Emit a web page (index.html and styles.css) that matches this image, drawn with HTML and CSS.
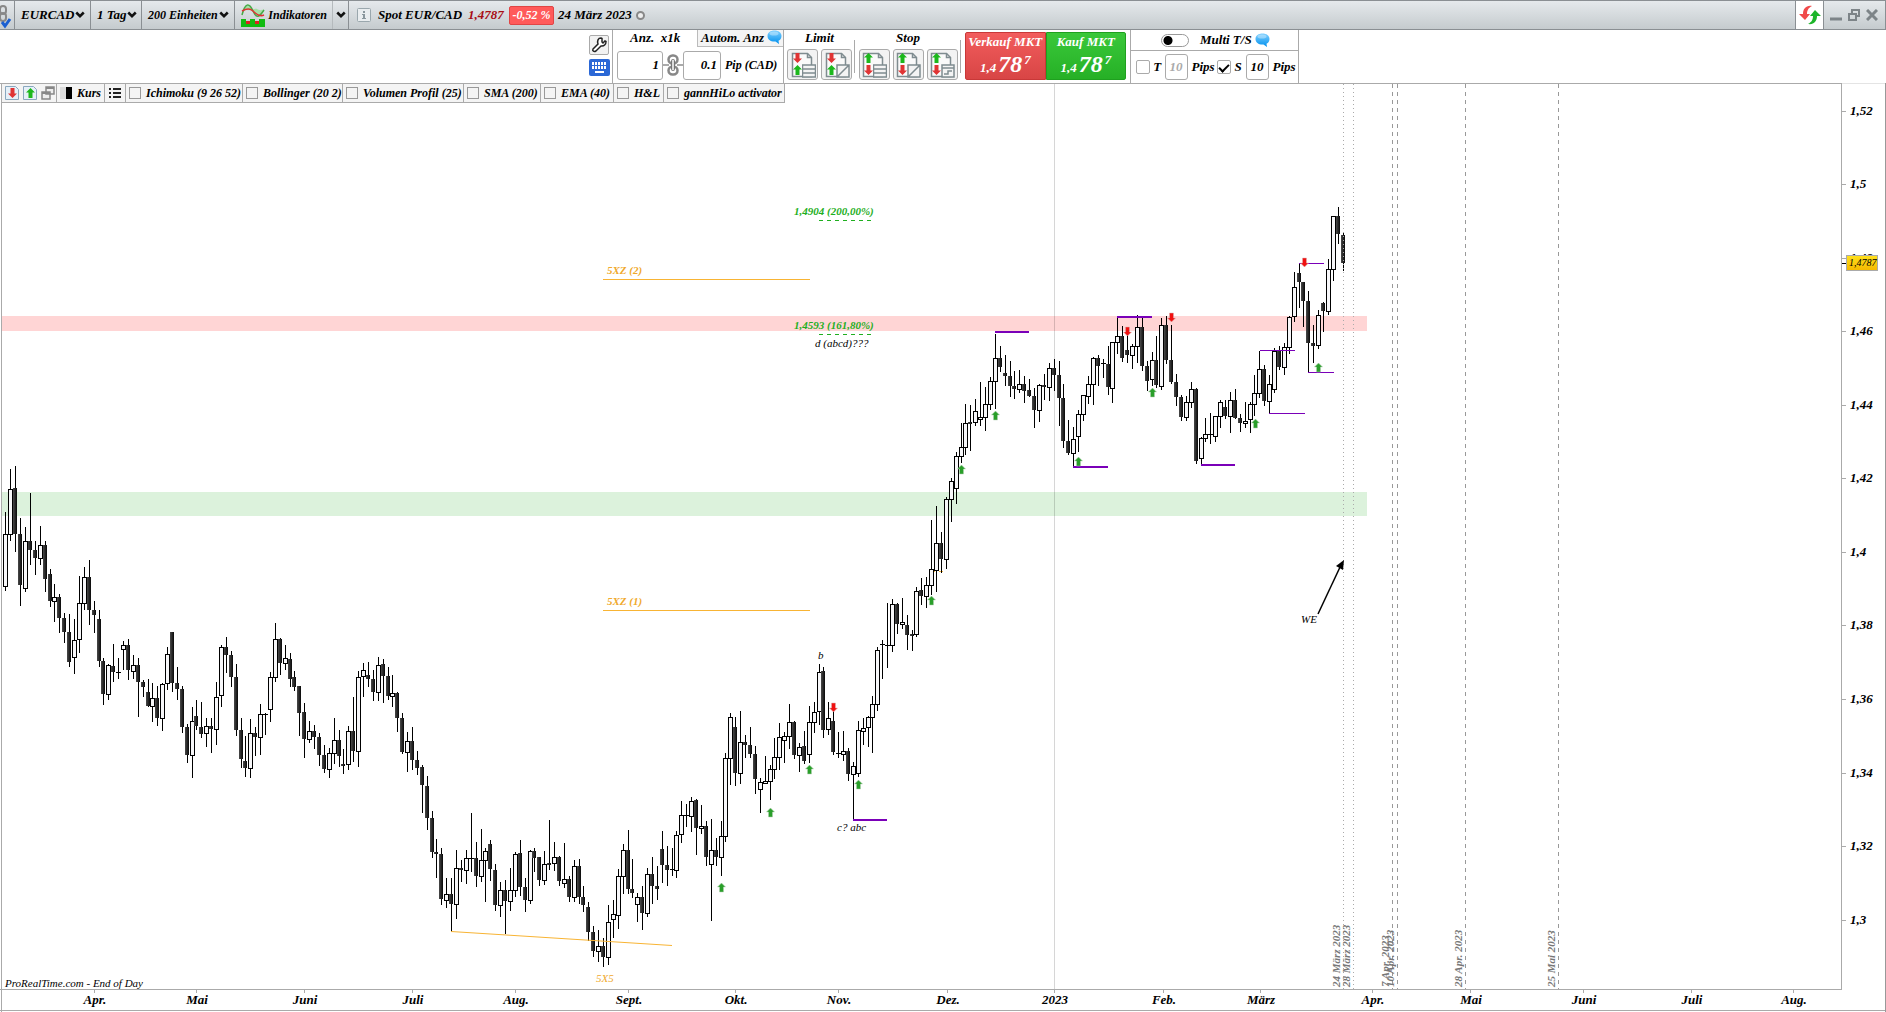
FILE: index.html
```html
<!DOCTYPE html>
<html lang="de">
<head>
<meta charset="utf-8">
<title>EURCAD – 1 Tag</title>
<link rel="stylesheet" href="styles.css">
</head>
<body>
<svg class="defs" aria-hidden="true">
  <symbol id="i-chev" viewBox="0 0 8 6"><path d="M1 1l3 3 3-3" fill="none" stroke="#111" stroke-width="2"/></symbol>
  <symbol id="i-bubble" viewBox="0 0 15 15"><path d="M7.500.5c4 0 7 2.200 7 5.500 0 2.300-1.200 4-3 4.800L12 14 8.500 11.500C4 12 .5 9.500.5 6 .5 2.700 3.500.5 7.500.5z" fill="url(#gb)"/><ellipse cx="7" cy="3.500" rx="4.500" ry="2" fill="#fff" opacity=".35"/></symbol>
  <symbol id="i-chain" viewBox="0 0 22 22"><path d="M0 11h7M15 11h7" stroke="#aaa" stroke-width="2"/><rect x="6.500" y="1.500" width="9" height="8" rx="4" fill="none" stroke="#888" stroke-width="2.500"/><rect x="6.500" y="12.500" width="9" height="8" rx="4" fill="none" stroke="#888" stroke-width="2.500"/><rect x="9.500" y="5.500" width="3" height="11" rx="1" fill="#ddd" stroke="#777"/></symbol>
  <symbol id="i-doc" viewBox="0 0 28 28"><path d="M3.500 25.500v-23h15l4 4v19z" fill="#fafafa" stroke="#7f8c90" stroke-width="1.500"/><path d="M18.500 2.500v4h4" fill="none" stroke="#7f8c90" stroke-width="1.500"/></symbol>
  <symbol id="i-up" viewBox="0 0 9 10"><path d="M4.500 0L9 4.500H6.500V10h-4V4.500H0z"/></symbol>
  <symbol id="i-down" viewBox="0 0 9 10"><path d="M4.500 10L9 5.500H6.500V0h-4v5.500H0z"/></symbol>
  <symbol id="i-rows" viewBox="0 0 14 14"><path d="M.5 1h13v4H.5zM.5 5h13v4H.5zM.5 9h13v4H.5z" fill="#f4f4f4" stroke="#7f8c90" stroke-width="1.500"/></symbol>
  <symbol id="i-slash" viewBox="0 0 14 14"><path d="M1 1h12v12H1zM1 13L13 1" fill="#f4f4f4" stroke="#7f8c90" stroke-width="1.500"/></symbol>
  <symbol id="i-step" viewBox="0 0 14 14"><path d="M1 1h12v12H1zM1 4h12M3 10h4V7h4" fill="#f4f4f4" stroke="#7f8c90" stroke-width="1.500"/></symbol>
  <linearGradient id="gb" x2="0" y2="1"><stop stop-color="#7fd0ff"/><stop offset="1" stop-color="#0090ee"/></linearGradient>
</svg>

<header class="titlebar">
  <div class="cell link"><svg width="14" height="28" viewBox="0 0 14 28"><rect x="0" y="5" width="6" height="8" rx="3" fill="none" stroke="#888" stroke-width="2"/><rect x="0" y="12" width="6" height="8" rx="3" fill="none" stroke="#888" stroke-width="2"/><path d="M2 21l3 4 5-7" fill="none" stroke="#1b5fd0" stroke-width="3"/></svg></div>
  <button class="cell symbol">EURCAD <svg width="10" height="8"><use href="#i-chev"/></svg></button>
  <button class="cell frame">1 Tag <svg width="10" height="8"><use href="#i-chev"/></svg></button>
  <button class="cell units">200 Einheiten <svg width="10" height="8"><use href="#i-chev"/></svg></button>
  <button class="cell indicators"><svg width="24" height="24" viewBox="0 0 24 24"><path d="M1 12C4 3 6 1 9 4s6 10 10 8l4-6c-3 2-5 1-7 0S9 8 6 7 3 10 1 12z" fill="#a5e0a5"/><path d="M1 12C4 0 8-1 12 8s7 5 11-1" fill="none" stroke="#4a4" stroke-width="1.500"/><path d="M1 8c5-3 8-3 11 0s7 6 11 4" fill="none" stroke="#d33" stroke-width="1.500"/><path d="M0 24v-8h5v2h4v-2h5v2h4v-2h6v8z" fill="#1b1"/><path d="M5 18h4v3H5zM14 18h4v3h-4z" fill="#d22"/></svg>Indikatoren</button>
  <button class="cell more" aria-label="Mehr"><svg width="10" height="8"><use href="#i-chev"/></svg></button>
  <div class="quote">
    <svg width="14" height="14" viewBox="0 0 14 14"><rect x=".5" y=".5" width="13" height="13" rx="1" fill="#e9edef" stroke="#9aa7ad"/><path d="M6 3h2v2H6zM5 6h3v4h1v1H5v-1h1V7H5z" fill="#8a979d"/></svg>
    <span class="name">Spot EUR/CAD</span>
    <span class="last">1,4787</span>
    <span class="change">-0,52 %</span>
    <span class="date">24 März 2023</span>
    <span class="dot"></span>
  </div>
  <div class="window">
    <button class="refresh" aria-label="Aktualisieren"><svg width="22" height="20" viewBox="0 0 22 20"><path d="M13 1C7 0 4 4 4 9H0l6 6 5-6H8c0-3 1-6 5-8z" fill="#f04a4a"/><path d="M9 19c6 1 9-3 9-8h4l-6-6-5 6h3c0 3-1 6-5 8z" fill="#1db52a"/></svg></button>
    <button aria-label="Minimieren"><svg width="12" height="12"><path d="M0 10h12" stroke="#7d8488" stroke-width="3"/></svg></button>
    <button aria-label="Wiederherstellen"><svg width="12" height="12" viewBox="0 0 12 12"><path d="M4 4V1h7v6H8M1 5h7v6H1z" fill="none" stroke="#7d8488" stroke-width="2"/></svg></button>
    <button aria-label="Schließen"><svg width="12" height="12" viewBox="0 0 12 12"><path d="M1 1l10 10M11 1L1 11" stroke="#7d8488" stroke-width="3"/></svg></button>
  </div>
</header>

<section class="trade">
  <div class="tools">
    <button class="wrench" aria-label="Einstellungen"><svg width="16" height="16" viewBox="0 0 16 16"><path d="M2 12l5-5c-1-3 0-6 3-6l1 .5V5l1 1 2-2 1 .5c0 3-2 5-5 4.500L5 14c-2 1-4 0-3-2z" fill="#fff" stroke="#222" stroke-width="1.500"/></svg></button>
    <button class="keys" aria-label="Tastatur"><svg width="21" height="17" viewBox="0 0 21 17"><rect width="21" height="17" rx="2" fill="#2b68d6"/><path d="M3 4.500h15M3 8.500h15" stroke="#fff" stroke-width="3" stroke-dasharray="2 1"/><path d="M6 13h9" stroke="#fff" stroke-width="2"/></svg></button>
  </div>
  <div class="amount">
    <div class="amount-head"><label for="qty">Anz. &nbsp;x1k</label><span class="auto">Autom. Anz <svg width="15" height="15"><use href="#i-bubble"/></svg></span></div>
    <div class="amount-row"><input id="qty" class="field wide" value="1"><svg class="chain" width="22" height="22"><use href="#i-chain"/></svg><input id="pip" class="field" value="0.1"><label class="pip" for="pip">Pip (CAD)</label></div>
  </div>
  <div class="orders two"><span>Limit</span>
    <div class="order-row">
      <button aria-label="Limit 1"><svg width="28" height="28" viewBox="0 0 28 28"><use href="#i-doc"/><use href="#i-down" x="4" y="2" width="9" height="10" fill="#e03434"/><use href="#i-up" x="4" y="14" width="9" height="10" fill="#1cb81c"/><use href="#i-rows" x="13" y="13" width="14" height="14"/></svg></button>
      <button aria-label="Limit 2"><svg width="28" height="28" viewBox="0 0 28 28"><use href="#i-doc"/><use href="#i-down" x="4" y="2" width="9" height="10" fill="#e03434"/><use href="#i-up" x="4" y="14" width="9" height="10" fill="#1cb81c"/><use href="#i-slash" x="13" y="13" width="14" height="14"/></svg></button>
    </div>
  </div>
  <div class="orders three"><span>Stop</span>
    <div class="order-row">
      <button aria-label="Stop 1"><svg width="28" height="28" viewBox="0 0 28 28"><use href="#i-doc"/><use href="#i-up" x="4" y="2" width="9" height="10" fill="#1cb81c"/><use href="#i-down" x="4" y="14" width="9" height="10" fill="#e03434"/><use href="#i-rows" x="13" y="13" width="14" height="14"/></svg></button>
      <button aria-label="Stop 2"><svg width="28" height="28" viewBox="0 0 28 28"><use href="#i-doc"/><use href="#i-up" x="4" y="2" width="9" height="10" fill="#1cb81c"/><use href="#i-down" x="4" y="14" width="9" height="10" fill="#e03434"/><use href="#i-slash" x="13" y="13" width="14" height="14"/></svg></button>
      <button aria-label="Stop 3"><svg width="28" height="28" viewBox="0 0 28 28"><use href="#i-doc"/><use href="#i-up" x="4" y="2" width="9" height="10" fill="#1cb81c"/><use href="#i-down" x="4" y="14" width="9" height="10" fill="#e03434"/><use href="#i-step" x="13" y="13" width="14" height="14"/></svg></button>
    </div>
  </div>
  <div class="market">
    <button class="sell"><span>Verkauf MKT</span><span class="price"><small>1,4</small><b>78</b><sup>7</sup></span></button>
    <button class="buy"><span>Kauf MKT</span><span class="price"><small>1,4</small><b>78</b><sup>7</sup></span></button>
  </div>
  <div class="multi">
    <div class="multi-head"><input type="checkbox" id="multi" class="switch"><label for="multi">Multi T/S</label><svg width="15" height="15"><use href="#i-bubble"/></svg></div>
    <div class="multi-row">
      <input type="checkbox" id="t" class="tick"><label class="letter" for="t">T</label><input class="field small off" value="10" aria-label="T Pips"><span class="unit">Pips</span>
      <input type="checkbox" id="s" class="tick" checked><label class="letter" for="s">S</label><input class="field small" value="10" aria-label="S Pips"><span class="unit">Pips</span>
    </div>
  </div>
</section>

<main class="chart">
  <div class="legend">
    <div class="item w-icons">
      <svg width="14" height="14" viewBox="0 0 14 14"><path d="M.5.5h10l3 3v10H.5z" fill="#e6f0f8" stroke="#8aa8bf"/><use href="#i-down" x="3" y="2" width="9" height="10" fill="#e03434"/></svg>
      <svg width="14" height="14" viewBox="0 0 14 14"><path d="M.5.5h10l3 3v10H.5z" fill="#e6f0f8" stroke="#8aa8bf"/><use href="#i-up" x="3" y="2" width="9" height="10" fill="#1cb81c"/></svg>
      <svg width="14" height="14" viewBox="0 0 14 14"><path d="M5 1h8v7H5zM1 6h8v7H1z" fill="#eee" stroke="#888" stroke-width="1.500"/><path d="M5 2h8M1 7h8" stroke="#888" stroke-width="2"/></svg>
    </div>
    <div class="item w-kurs"><span class="swatch"></span><span>Kurs</span></div>
    <div class="item w-list"><svg width="12" height="12" viewBox="0 0 12 12"><path d="M0 2h2M4 2h8M0 6h2M4 6h8M0 10h2M4 10h8" stroke="#222" stroke-width="2"/></svg></div>
    <label class="item w-ichi"><input type="checkbox"><span>Ichimoku (9 26 52)</span></label>
    <label class="item w-boll"><input type="checkbox"><span>Bollinger (20 2)</span></label>
    <label class="item w-vol"><input type="checkbox"><span>Volumen Profil (25)</span></label>
    <label class="item w-sma"><input type="checkbox"><span>SMA (200)</span></label>
    <label class="item w-ema"><input type="checkbox"><span>EMA (40)</span></label>
    <label class="item w-hl"><input type="checkbox"><span>H&amp;L</span></label>
    <label class="item w-gann"><input type="checkbox"><span>gannHiLo activator</span></label>
  </div>
  <svg class="plot" viewBox="0 83 1886 929" role="img" aria-label="EUR/CAD Tageskerzen">
    <defs>
      <linearGradient id="gf"><stop stop-color="#4a4a4a"/><stop offset="1" stop-color="#080808"/></linearGradient>
      <linearGradient id="gp" x2="0" y2="1"><stop stop-color="#ffe11c"/><stop offset="1" stop-color="#f5b800"/></linearGradient>
      <g id="buy"><path d="M0 0l4 4H2v5h-4V4h-2z" transform="translate(.5 0)" fill="#2a9f2a" stroke="#b5ceb5" stroke-width=".5"/></g>
      <g id="sell"><path d="M0 9l4-4H2V0h-4v5h-2z" transform="translate(.5 0)" fill="#f01010" stroke="#d8b5b5" stroke-width=".5"/></g>
    </defs>
    <g class="crisp">
      <rect x="2" y="316" width="1365" height="15" fill="#ffd5d5"/>
      <rect x="2" y="492" width="1365" height="24" fill="#dcf2dc"/>
      <rect x="1054" y="84" width="1" height="905" fill="#000" opacity=".16"/>
      <path d="M1 83V1012M0 1010.500H1886M0 989.500H1842M1841.500 83V990M0 83.500H1842" class="frame-line"/>
      <path d="M1885.500 83V1012" stroke="#999"/>
      <path d="M1842 83.500H1885" stroke="#e4e4e4"/>
      <path d="M603 279.500H810M603 610.500H810M931 571.500h4M939 571.500h4" stroke="#f8b434" fill="none"/>
      <path d="M819 220.500h53M819 334.500h53" fill="none" stroke="#1faf1f" stroke-dasharray="4 4"/>
      <g id="candles"></g>
      <path d="M1343.500 84V989M1353.500 84V989" fill="none" stroke="#aaa" stroke-dasharray="1 3"/>
      <path d="M1392.500 84V989M1397.500 84V989M1465.500 84V989M1558.500 84V989" fill="none" stroke="#999" stroke-dasharray="4 4"/>
      <path d="M995 332h34M1117 317h35M1073 467h35M1201 465h34M853 820h34" fill="none" stroke="#7a00b8" stroke-width="2"/>
      <path d="M1260 350.500h35M1269 413.500h36M1308 372.500h26M1299 263.500h25" fill="none" stroke="#7a00b8"/>
    </g>
    <path d="M451 931.500L672 945.500" stroke="#f8b434"/>
    <path d="M1318 614L1341 565" stroke="#000" stroke-width="1.500"/><path d="M1344 560l-1 10-7-4z" fill="#000"/>
    <g id="signals"></g>
    <g class="note bold green"><text x="794" y="215">1,4904 (200,00%)</text><text x="794" y="329">1,4593 (161,80%)</text></g>
    <g class="note bold orange"><text x="607" y="274">5XZ (2)</text><text x="607" y="605">5XZ (1)</text></g>
    <text class="note orange" x="596" y="982">5X5</text>
    <g class="note"><text x="815" y="347">d (abcd)???</text><text x="818" y="659">b</text><text x="837" y="831">c? abc</text><text x="1301" y="623">WE</text><text class="brand" x="5" y="987">ProRealTime.com - End of Day</text></g>
    <g class="note bold grey">
      <text transform="translate(1340 987) rotate(-90)">24 März 2023</text><text transform="translate(1350 987) rotate(-90)">28 März 2023</text>
      <text transform="translate(1389 987) rotate(-90)">7 Apr. 2023</text><text transform="translate(1394 987) rotate(-90)">10 Apr. 2023</text>
      <text transform="translate(1462 987) rotate(-90)">28 Apr. 2023</text><text transform="translate(1555 987) rotate(-90)">25 Mai 2023</text>
    </g>
    <g id="axes" class="axis"></g>
    <path d="M1842 263.500h4" stroke="#000"/>
    <rect x="1846.500" y="255.500" width="31" height="15" fill="url(#gp)" stroke="#aaa"/>
    <text class="note tag" x="1849" y="266">1,4787</text>
  </svg>
</main>
<script src="chart.js"></script>
</body>
</html>
```
FILE: styles.css
```css
* { box-sizing: border-box; }
body { margin: 0; background: #fff; color: #000; font: italic bold 13px/16px "Liberation Serif", "Times New Roman", serif; overflow-x: hidden; }
button, input { font: inherit; color: inherit; margin: 0; }
button { background: none; border: 0; padding: 0; }
svg { display: block; flex: none; }
.defs { position: absolute; width: 0; height: 0; }

.titlebar { display: flex; height: 30px; border: 1px solid #8a8f93; border-left: 0; background: linear-gradient(#e5e9ec, #c5cbce); white-space: nowrap; }
.cell { display: flex; align-items: center; justify-content: space-between; flex: none; padding: 0 5px 0 6px; border-right: 1px solid #8a8f93; }
.cell.link { width: 15px; padding: 0; }
.symbol { width: 76px; }
.frame { width: 51px; }
.units { width: 93px; font-size: 12px; }
.indicators { width: 98px; border-right-color: #b5babd; font-size: 12px; }
.more { width: 16px; padding: 0 3px; }
.quote { display: flex; align-items: center; gap: 4px; padding-left: 8px; }
.name { margin-left: 3px; width: 86px; }
.last { color: #a80d14; width: 37px; }
.change { height: 19px; width: 45px; line-height: 17px; text-align: center; border: 1px solid #e04545; border-radius: 2px; background: #ff5a5a; color: #fff; font-size: 12px; }
.date { width: 74px; }
.dot { width: 9px; height: 9px; border: 2px solid #888; border-radius: 50%; background: #eee; }
.window { display: flex; align-items: center; gap: 6px; margin-left: auto; padding-right: 7px; }
.refresh { display: grid; place-items: center; width: 29px; height: 28px; background: #fff; border: 1px solid #8a8f93; border-width: 0 1px; }

.trade { display: flex; justify-content: center; height: 53px; white-space: nowrap; }
.tools { display: flex; flex-direction: column; gap: 4px; padding: 5px 3px 0 2px; border-right: 1px solid #aaa; width: 26px; }
.wrench { display: grid; place-items: center; width: 20px; height: 20px; border: 1px solid #aaa; border-radius: 2px; background: #f2f2f2; }
.amount { width: 171px; border-right: 1px solid #aaa; }
.amount-head { display: flex; height: 17px; justify-content: flex-end; line-height: 15px; }
.amount-head label { width: 67px; }
.auto { display: flex; width: 86px; gap: 3px; padding-left: 3px; border: 1px solid #bbb; border-width: 0 0 1px 1px; background: #f4f4f4; }
.amount-row { display: flex; align-items: center; height: 36px; padding-left: 4px; }
.field { height: 29px; width: 38px; padding: 0 3px; text-align: right; border: 1px solid #aaa; border-radius: 3px; background: #fff; }
.field.wide { width: 46px; }
.chain { margin: 0 -1px; }
.pip { margin-left: 4px; width: 53px; font-size: 12px; }
.orders { display: flex; flex-direction: column; align-items: center; gap: 3px; padding: 0 2px; position: relative; }
.orders.two { width: 71px; }
.orders.three { width: 106px; padding: 0 3px; }
.orders::after { content: ""; position: absolute; right: 0; top: 10px; height: 33px; border-right: 1px solid #aaa; }
.order-row { display: flex; gap: 3px; }
.order-row button { display: grid; place-items: center; width: 31px; height: 31px; border: 1px solid #aaa; border-radius: 3px; background: #f3f3f3; }
.market { display: flex; padding: 2px 4px 0 4px; width: 170px; border-right: 1px solid #aaa; }
.market button { display: flex; flex-direction: column; align-items: center; flex: 1; height: 48px; color: #fff; line-height: 17px; }
.sell { background: linear-gradient(#f25c5c, #d84545); border: 1px solid #c83838; border-radius: 2px 0 0 2px; }
.buy { background: linear-gradient(#3ac83a, #26b026); border: 1px solid #1fa01f; border-radius: 0 2px 2px 0; }
.price { display: flex; align-items: baseline; gap: 2px; line-height: 28px; }
.price small { font-size: 13px; }
.price b { font-size: 24px; }
.price sup { font-size: 13px; line-height: 13px; align-self: flex-start; padding-top: 3px; vertical-align: baseline; }
.multi { width: 168px; border-right: 1px solid #aaa; }
.multi-head { display: flex; align-items: center; height: 21px; padding-left: 30px; border-bottom: 1px solid #aaa; }
.multi-head label { width: 55px; margin: 0 0 0 11px; }
.switch { appearance: none; width: 28px; height: 13px; border: 1px solid #999; border-radius: 7px; background: radial-gradient(circle at 6px 50%, #000 4px, #fff 5px); }
.multi-row { display: flex; align-items: center; height: 31px; padding-left: 5px; }
.tick { appearance: none; width: 14px; height: 14px; border: 1px solid #aaa; border-radius: 2px; background: #fff; display: grid; place-items: center; }
.tick:checked::after { content: ""; width: 8px; height: 4px; border: solid #000; border-width: 0 0 2px 2px; transform: rotate(-45deg); }
.letter { width: 15px; text-align: center; }
.field.small { width: 23px; height: 26px; text-align: center; }
.off { color: #aaa; }
.unit { width: 30px; padding-left: 4px; }

.chart { position: relative; }
.plot { width: 100%; height: auto; }
.legend { position: absolute; left: 2px; top: 1px; display: flex; height: 19px; background: #f4f4f4; border-bottom: 1px solid #aaa; font-size: 12px; line-height: 16px; white-space: nowrap; }
.item { display: flex; align-items: center; flex: none; gap: 5px; padding: 0 1px 0 3px; border-right: 1px solid #aaa; }
.item input { appearance: none; flex: none; width: 12px; height: 12px; border: 1px solid #999; background: #f4f4f4; }
.swatch { flex: none; width: 12px; height: 12px; background: linear-gradient(90deg, #ddd 50%, #000 50%); }
.w-icons { width: 55px; gap: 4px; }
.w-kurs { width: 48px; }
.w-list { width: 21px; padding-left: 4px; }
.w-ichi { width: 117px; }
.w-boll { width: 100px; }
.w-vol { width: 121px; }
.w-sma { width: 77px; }
.w-ema { width: 73px; }
.w-hl { width: 50px; }
.w-gann { width: 121px; }

.crisp { shape-rendering: crispEdges; }
.frame-line { stroke: #aaa; fill: none; }
.wick { stroke: #000; fill: none; }
.hollow { stroke: #000; fill: #f7f7f9; }
.filled { fill: url(#gf); }
.note { font-size: 11px; font-weight: normal; }
.note.bold { font-weight: bold; }
.note.tag { font-size: 10px; }
.note .brand { font-size: 11px; }
.green { fill: #1faf1f; }
.orange { fill: #f0a92c; }
.note.grey { fill: #777; font-size: 11px; }
.tickline { stroke: #aaa; }
.month { text-anchor: middle; }
```
FILE: chart.js
```js
// Candles, oldest first: high, body top, body bottom, low; "f" = falling, "h" = rising
const DATA = `
h512 534 587 591,h469 489 535 541,f466 488 534 552,f518 534 585 606,h527 541 589 592,f493 541 550 565,f541 550 558 575,h526 545 559 565,f541 545 579 592,f569 574 601 607
h584 597 602 622,f594 597 618 633,f613 618 632 643,f614 632 662 667,h619 640 658 674,h576 603 640 653,h567 577 604 610,f560 577 610 625,f601 610 615 633,f610 619 661 667
f658 661 694 705,h664 665 695 700,f644 666 672 682,f658 672 673 679,h641 645 650 670,f639 645 670 680,h655 665 672 679,f658 665 682 717,f680 682 687 697,f679 692 706 707
h683 698 707 722,f686 698 718 726,h683 684 719 731,h647 654 684 690,f632 632 683 692,f667 683 689 700,f686 689 727 733,f724 727 755 763,h707 721 756 778,f700 716 726 730
f702 727 734 738,h718 726 734 747,f718 726 729 753,h682 697 730 745,h645 647 696 707,f637 647 655 673,f651 655 677 687,f664 677 730 736,f718 730 759 768,f736 761 768 777
h719 733 769 778,f727 733 737 756,h704 714 738 755,f713 714 715 735,h672 677 710 722,h623 639 678 682,f638 639 663 675,h645 658 664 670,f653 659 679 687,f671 677 687 691
f686 686 713 736,f703 712 739 758,h721 731 740 743,f725 731 737 749,f733 737 755 766,f745 755 769 773,h748 753 770 778,h718 740 754 764,f730 740 756 767,f749 764 766 774
h726 731 765 770,f697 731 751 762,h671 677 752 767,h663 670 677 697,f662 675 679 687,f670 679 692 701,h657 665 693 701,f659 664 676 703,f667 676 696 700,h675 693 697 707
f692 693 718 732,f713 718 752 754,h732 741 753 772,f727 741 760 770,f751 760 768 775,f765 767 785 813,f776 786 818 830,f811 818 852 858,f839 852 854 878,f848 854 899 905
h878 894 901 908,f878 894 904 932,h850 868 905 919,f860 868 870 882,h850 858 871 884,f813 858 859 872,f842 858 876 887,h829 860 877 882,h848 851 861 902,f840 844 869 881
f864 870 905 911,h882 890 906 917,f880 890 901 934,h868 890 902 911,h852 854 891 897,f840 853 887 896,f878 887 900 912,h850 851 901 904,f848 851 858 872,f857 857 880 886
h851 864 881 885,f820 863 865 870,h842 857 864 871,f856 857 881 886,h843 879 884 888,f876 879 897 902,h860 866 898 902,f859 866 897 904,f886 897 905 912,f902 907 932 941
f926 932 951 957,h930 946 952 962,f938 946 957 967,h905 922 958 965,h900 914 920 938,h869 876 916 929,h844 850 877 894,f830 850 889 894,f859 889 893 898,h893 897 905 922
f886 897 913 930,h868 874 914 917,f857 874 886 904,f866 886 889 900,f831 849 865 883,f846 865 870 886,f848 869 870 876,h831 835 871 878,h801 815 835 843,f804 815 816 827
h797 801 817 832,f799 800 828 855,h805 826 829 834,f821 826 857 866,h819 850 865 921,f838 850 857 866,h821 836 858 876,h753 758 837 842,h713 717 759 785,f717 727 773 786
h711 742 774 784,f735 742 745 758,f727 745 754 758,f746 754 779 794,h778 782 790 813,h756 781 784 784,h765 769 782 800,h738 757 770 779,h723 737 758 770,h732 736 741 763
h704 722 737 749,f721 722 755 759,h743 747 756 772,f731 746 761 764,h706 722 755 763,h702 712 723 733,h664 672 712 725,f667 671 730 738,h702 718 730 735,f710 721 752 755
f732 753 754 758,h731 751 755 761,f748 751 774 781,h762 766 775 820,h721 730 774 777,h718 728 732 745,h716 717 728 747,h696 704 718 753,h647 650 705 711,f640 644 645 679
f603 645 646 668,h599 604 646 652,f603 604 624 634,h598 622 625 629,f615 625 635 650,f630 634 636 651,h587 591 635 637,f578 590 596 605,h577 585 597 608,h520 569 586 595
h506 543 571 592,f532 543 559 573,h497 499 560 569,h478 481 500 522,h452 456 489 504,h423 447 457 463,h404 423 448 455,f405 422 424 451,h399 411 423 426,h382 417 420 426
h387 404 418 431,h377 381 405 410,h334 358 382 409,f346 358 367 372,f355 373 376 386,f361 376 386 397,f371 386 389 399,h370 384 390 393,f376 384 391 403,f379 390 396 397
f388 396 410 428,h384 385 411 422,f374 385 387 400,h363 368 388 401,f359 368 375 391,f361 375 398 426,f384 398 441 448,f420 441 453 455,h427 439 454 466,h410 414 437 452
h395 395 415 421,h376 384 397 404,h357 358 385 405,f355 358 366 386,f359 363 364 378,f346 364 387 395,h342 342 389 403,h318 336 343 354,f326 336 358 362,f335 350 355 363
h344 346 356 369,h315 327 347 363,f317 327 366 371,f361 366 381 391,h352 360 380 386,f336 360 385 388,h318 325 387 390,f316 325 360 364,f325 360 382 384,f374 382 397 406
f395 397 417 421,h396 402 418 421,h382 389 403 408,f388 389 461 464,h437 438 459 464,h418 434 439 442,f413 434 435 444,h416 416 437 442,h400 402 417 428,f400 407 416 419
h392 400 417 433,f389 400 418 419,f414 418 423 432,h402 421 424 428,h402 404 420 433,h375 393 405 416,h351 369 394 398,f365 369 401 406,h375 384 402 413,h348 351 390 393
f346 351 367 370,h343 347 368 375,h316 317 348 354,h272 287 317 322,f264 273 282 308,f282 282 301 327,f291 301 343 372,f325 343 346 363,h310 315 346 349,f302 303 311 332
h259 269 312 315,h216 216 270 281,f207 216 234 244,f233 235 263 271`;

let out = "";
DATA.trim().split(/[,\n]+/).forEach((row, i) => {
  const [high, top, bottom, low] = row.slice(1).split(" ").map(Number);
  const x = Math.floor(5.96 + 4.898 * i);
  out += `<path class="wick" d="M${x + 0.5} ${high}V${low}"/>`;
  if (row[0] === "h") {
    out += `<rect class="hollow" x="${x - 1.5}" y="${top + 0.5}" width="4" height="${Math.max(1, bottom - top - 1)}"/>`;
  } else if (bottom - top < 2) {
    out += `<path class="wick" d="M${x - 2} ${top + 0.5}h5"/>`;
  } else {
    out += `<rect class="filled" x="${x - 2}" y="${top}" width="4" height="${bottom - top}"/>`;
  }
});
document.getElementById("candles").innerHTML = out;

const BUY = [[721, 883], [770, 808], [809, 765], [858, 780], [931, 596], [961, 465], [995, 411], [1078, 457], [1152, 388], [1255, 419], [1318, 363]];
const SELL = [[833, 703], [1127, 327], [1171, 313], [1304, 258]];
const mark = (id) => ([x, y]) => `<use href="#${id}" x="${x}" y="${y}"/>`;
document.getElementById("signals").innerHTML = BUY.map(mark("buy")).join("") + SELL.map(mark("sell")).join("");

const PRICES = [["1,52", 111], ["1,5", 184], ["1,48", 258], ["1,46", 331], ["1,44", 405], ["1,42", 478], ["1,4", 552], ["1,38", 625], ["1,36", 699], ["1,34", 773], ["1,32", 846], ["1,3", 920]];
const MONTHS = [["Apr.", 94], ["Mai", 196], ["Juni", 304], ["Juli", 412], ["Aug.", 515], ["Sept.", 628], ["Okt.", 735], ["Nov.", 838], ["Dez.", 947], ["2023", 1054], ["Feb.", 1163], ["März", 1260], ["Apr.", 1372], ["Mai", 1470], ["Juni", 1583], ["Juli", 1691], ["Aug.", 1793]];
document.getElementById("axes").innerHTML =
  PRICES.map(([t, y]) => `<path class="tickline" d="M1842 ${y + 0.5}h4"/><text x="1850" y="${y + 4}">${t}</text>`).join("") +
  MONTHS.map(([t, x]) => `<path class="tickline" d="M${x + 0.5} 990v3"/><text class="month" x="${x + 1}" y="1004">${t}</text>`).join("");
```
